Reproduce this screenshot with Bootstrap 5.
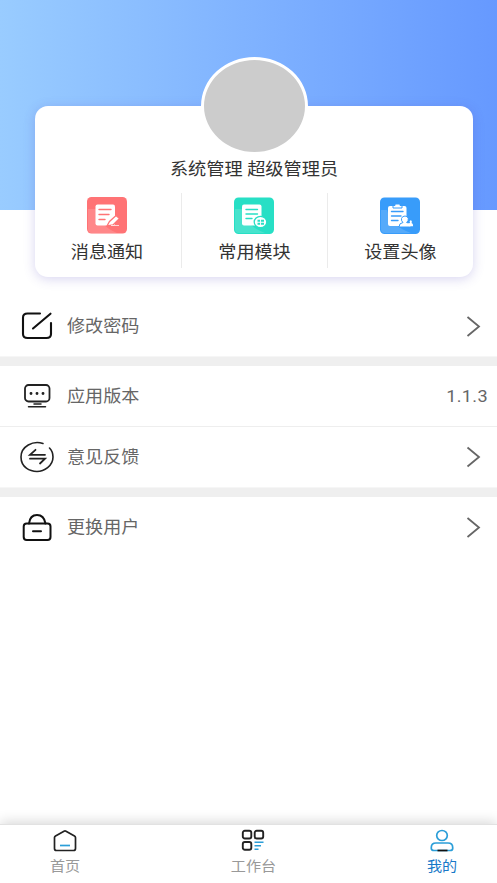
<!DOCTYPE html>
<html lang="zh-CN">
<head>
<meta charset="utf-8">
<meta name="viewport" content="width=device-width, initial-scale=1">
<title>我的</title>
<link href="https://cdn.jsdelivr.net/npm/bootstrap@5.3.0/dist/css/bootstrap.min.css" rel="stylesheet">
<style>
body{font-family:Roboto,"Noto Sans CJK SC",sans-serif;height:883px;overflow:hidden;background:#fff}
svg{display:block;flex:none}
.hero{height:210px;padding:106px 24px 0 35px;background:linear-gradient(90deg,#9cf,#69f)}
.profile{height:170.5px;border-radius:13px;box-shadow:0 2px 12px rgba(80,70,190,.23)}
.avatar{width:107px;height:98px;border:3px solid #fff;border-radius:50%;background:#ccc;margin-top:-49px}
.squat{display:block;transform:scaleY(.93);white-space:nowrap}
.username{font-size:18.2px;line-height:24px;color:#333;margin-top:2px}
.shortcuts{height:75px;margin-top:12px}
.shortcut{font-size:18.1px;line-height:24px;color:#333;padding-top:4px;gap:6px}
.shortcut+.shortcut{border-left:1px solid #ebebeb}
.shortcut:first-child{padding-right:2px}
.menu{padding-top:86px}
.entry{height:60px;padding:0 16px 0 19px;font-size:18.1px;color:#666}
.entry .squat{margin-bottom:1px}
.entry-icon{width:36px;margin-right:12px}
.band{height:10px;border-top:1px solid #f6f6f6;background:#efefef}
.hairline{height:1px;background:#eee}
.version{margin-right:-7px;letter-spacing:.35px}
.tabs{height:59px;border-top:1px solid #e2e2e2;box-shadow:0 -2px 12px rgba(0,0,0,.16);padding-top:4px}
.tab-item{font-size:15.1px;line-height:20px;color:#999;gap:3px}
.tab-side{width:130px}
.tab-right{width:120px;padding-left:10px}
.tab-item.active{color:#1878c8}
</style>
<script src="https://cdn.jsdelivr.net/npm/bootstrap@5.3.0/dist/js/bootstrap.bundle.min.js"></script>
</head>
<body class="d-flex flex-column">
<header class="hero flex-shrink-0">
  <section class="profile bg-white d-flex flex-column align-items-center">
    <div class="avatar flex-shrink-0"></div>
    <div class="username"><span class="squat">系统管理 超级管理员</span></div>
    <div class="shortcuts d-flex w-100">
      <div class="shortcut col-4 d-flex flex-column align-items-center">
        <svg width="40" height="37" viewBox="0 0 40 37"><rect width="40" height="36.5" rx="4.5" fill="#ff7375"/><path d="M1 12H9Q11 28 30 36H5Q1 36 1 32Z" fill="#fff" opacity=".15"/><rect x="8.500" y="7.500" width="19.500" height="21" rx="2" fill="#fff"/><path d="M12 12.500H24M12 17.500H22M12 22.500H18" stroke="#ff7375" stroke-width="1.400" stroke-linecap="round"/><path d="M20 29 22.500 24.500 29 18.500 32.500 21.500 26 28Z" fill="#fff" stroke="#ff7375" stroke-width="1.300"/><path d="M24 28.500H32" stroke="#fff" opacity=".7"/></svg>
        <span class="squat">消息通知</span>
      </div>
      <div class="shortcut col-4 d-flex flex-column align-items-center">
        <svg width="40" height="37" viewBox="0 0 40 37"><rect y=".5" width="40" height="36.500" rx="4.500" fill="#27dfc5"/><path d="M1 12H8Q11 29 31 36H5Q1 36 1 32Z" fill="#fff" opacity=".15"/><rect x="8" y="7.500" width="19.500" height="21" rx="2" fill="#fff"/><path d="M12 12.500H23.500M12 17H23.500M12 21.500H18" stroke="#27dfc5" stroke-width="1.400" stroke-linecap="round"/><ellipse cx="26.500" cy="25" rx="6.300" ry="5.700" fill="#fff" stroke="#27dfc5" stroke-width="1.300"/><path d="M23.500 22.800h2.600v2h-2.600zM27 22.800h3v2h-3zM23.500 25.700h2.600v2h-2.600zM27 25.700h3v2h-3z" fill="#27dfc5"/></svg>
        <span class="squat">常用模块</span>
      </div>
      <div class="shortcut col-4 d-flex flex-column align-items-center">
        <svg width="40" height="37" viewBox="0 0 40 37"><rect y=".5" width="40" height="36.500" rx="4.500" fill="#389cfa"/><path d="M1 13H7Q11 29 31 36H5Q1 36 1 32Z" fill="#fff" opacity=".15"/><rect x="8" y="9" width="18.500" height="20" rx="2" fill="#fff"/><path d="M13 8.500h2V7h5v1.500h2v2.500h-9z" fill="#fff" stroke="#389cfa"/><path d="M11.500 14.500H23M11.500 19H21M11.500 23.500H18" stroke="#389cfa" stroke-width="1.400" stroke-linecap="round"/><path d="M19 30q0-4 4-4.500-2-1.500-1.500-4 .8-2.500 3.500-2.500t3.300 2.500q.3 2.500-1.700 4Q31 26 31 30Z" fill="#fff" stroke="#389cfa"/><path d="M29.500 29.300q-.2-2.300-1.500-2.800l2-.5q-1-2.200.5-2.700 2 .5 1 2.800 1.800.4 1.600 3.200Z" fill="#fff"/></svg>
        <span class="squat">设置头像</span>
      </div>
    </div>
  </section>
</header>
<main class="menu flex-grow-1">
  <div class="entry d-flex align-items-center">
    <svg class="entry-icon" width="36" height="36" viewBox="0 0 36 36" fill="none" stroke="#111" stroke-width="2.100" stroke-linecap="round"><path d="M21 5.500H8.500Q4 5.500 4 9.500V26Q4 30 8.500 30H27.500Q32 30 32 26V15M14 20.500 31.500 5.700"/></svg>
    <span class="squat me-auto">修改密码</span>
    <svg width="15" height="22" viewBox="0 0 15 22" fill="none" stroke="#666" stroke-width="1.800"><path d="M1.500 2 13 11.500 1.500 21"/></svg>
  </div>
  <div class="band"></div>
  <div class="entry d-flex align-items-center">
    <svg class="entry-icon" width="36" height="36" viewBox="0 0 36 36" fill="none" stroke="#222" stroke-width="1.800" stroke-linecap="round"><rect x="6" y="7" width="24.500" height="16.500" rx="3.500"/><path d="M15 26H22M9.500 28.700H26.500" stroke-width="1.500"/><path d="M12 15.500h.01M18 15.500h.01M24 15.500h.01" stroke-width="2.900"/></svg>
    <span class="squat me-auto">应用版本</span>
    <span class="squat version">1.1.3</span>
  </div>
  <div class="hairline"></div>
  <div class="entry d-flex align-items-center">
    <svg class="entry-icon" width="36" height="36" viewBox="0 0 36 36" fill="none" stroke="#222" stroke-width="1.600" stroke-linecap="round"><path d="M24 4.500C14 1 2 7.500 2 18S11 32.500 18 32.500 34 27 34 18Q34 12.500 30.500 9"/><path d="M26 15.800H11L16.500 10.800M11 19.700H26L21 24.500" stroke-width="1.800"/></svg>
    <span class="squat me-auto">意见反馈</span>
    <svg width="15" height="22" viewBox="0 0 15 22" fill="none" stroke="#666" stroke-width="1.800"><path d="M1.500 1.500 13 11 1.500 20.500"/></svg>
  </div>
  <div class="band"></div>
  <div class="entry d-flex align-items-center">
    <svg class="entry-icon" width="36" height="36" viewBox="0 0 36 36" fill="none" stroke="#111" stroke-width="2" stroke-linecap="round"><rect x="4.700" y="14.500" width="26.800" height="16.500" rx="3"/><path d="M10 14.500Q11 6 18 6T26.500 14.500M14 22.300H22"/></svg>
    <span class="squat me-auto">更换用户</span>
    <svg width="15" height="22" viewBox="0 0 15 22" fill="none" stroke="#666" stroke-width="1.800"><path d="M1.500 2 13 11.500 1.500 21"/></svg>
  </div>
</main>
<nav class="tabs bg-white d-flex justify-content-between flex-shrink-0">
  <div class="tab-item tab-side d-flex flex-column align-items-center">
    <svg width="24" height="24" viewBox="0 0 24 24" fill="none" stroke="#222" stroke-width="1.700" stroke-linejoin="round"><path d="M11 2.200Q12 1.700 13 2.200L21.500 7Q22.500 7.600 22.500 8.600V19.500Q22.500 21.500 20.500 21.500H3.500Q1.500 21.500 1.500 19.500V8.600Q1.500 7.600 2.500 7Z"/><path d="M7 16.500H17" stroke="#2b9ed8"/></svg>
    <span class="squat">首页</span>
  </div>
  <div class="tab-item d-flex flex-column align-items-center">
    <svg width="24" height="24" viewBox="0 0 24 24" fill="none" stroke="#222" stroke-width="1.900"><rect x="1.800" y="1.800" width="8.500" height="7.700" rx="2"/><rect x="13.700" y="1.800" width="8.500" height="7.700" rx="2"/><rect x="1.800" y="13" width="8.500" height="7.700" rx="2"/><path d="M13.500 13.300H22.500M13.500 16.800H20M13.500 20.300H17.500" stroke="#2b9ed8" stroke-width="1.600"/></svg>
    <span class="squat">工作台</span>
  </div>
  <div class="tab-item tab-right active d-flex flex-column align-items-center">
    <svg width="24" height="24" viewBox="0 0 24 24" fill="none" stroke="#2b9ed8" stroke-width="1.700"><ellipse cx="12" cy="6.500" rx="5.300" ry="5"/><path d="M6 14H18Q22.700 14 22.700 18.500V19.500Q22.700 21.500 20 21.500H4Q1.300 21.500 1.300 19.500V18.500Q1.300 14 6 14Z"/><path d="M7.500 21.500H17.500" stroke="#111"/></svg>
    <span class="squat">我的</span>
  </div>
</nav>
</body>
</html>
